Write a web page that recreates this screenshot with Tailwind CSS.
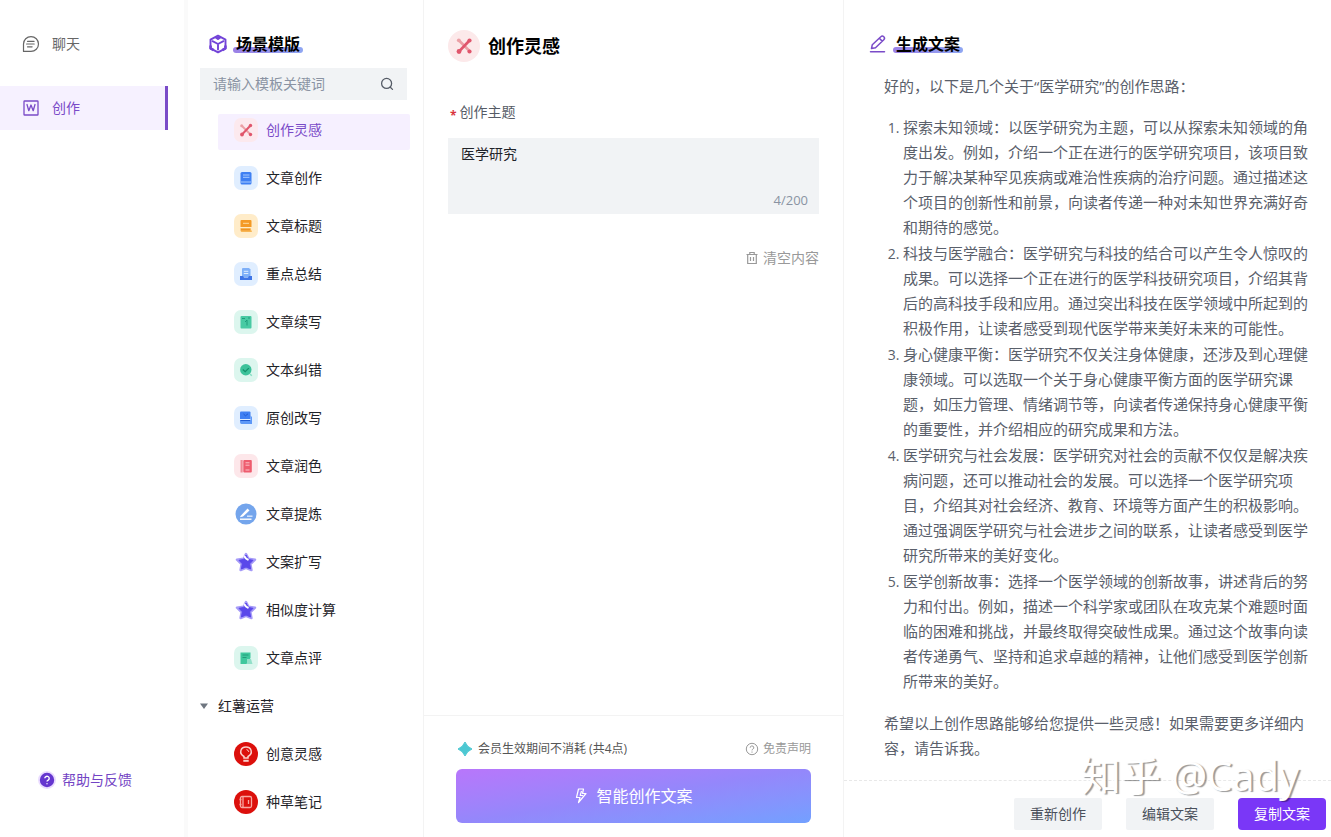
<!DOCTYPE html>
<html lang="zh-CN">
<head>
<meta charset="utf-8">
<meta name="viewport" content="width=device-width, initial-scale=1">
<title>创作</title>
<script src="https://cdn.jsdelivr.net/npm/@tailwindcss/browser@4"></script>
</head>
<body class="bg-white font-['Open_Sans','Noto_Sans_CJK_SC',sans-serif] text-sm text-[#1f2329]">
<div class="flex h-screen overflow-hidden">

  <!-- Main navigation -->
  <nav class="flex w-46 shrink-0 flex-col justify-between pt-[22px] pb-[35px]">
    <div class="flex flex-col gap-5 pr-4">
      <a href="#" class="flex h-11 items-center gap-3 pl-[22px] text-[#666]">
        <svg class="size-[18px]" viewBox="0 0 18 18" fill="none" stroke="currentColor" stroke-width="1.200" stroke-linecap="round" stroke-linejoin="round"><path d="M1.500 16.400V9a7.500 7.400 0 1 1 7.500 7.400Z"/><path d="M5.500 6.300h6.600M4.600 9h7.600M5.500 11.800h4.600"/></svg>
        聊天
      </a>
      <a href="#" aria-current="page" class="flex h-11 items-center gap-3 border-r-3 border-[#7a4bc8] bg-[#f6f1ff] pl-[22px] text-[#7a4bc8]">
        <svg class="size-[18px]" viewBox="0 0 18 18" fill="none" stroke="currentColor" stroke-width="1.300" stroke-linejoin="round"><rect x="2" y="2" width="14" height="14" rx=".6"/><path d="M5 5.500l1.800 6.200L9 6l2.200 5.700L13 5.500" stroke-linecap="round"/></svg>
        创作
      </a>
    </div>
    <a href="#" class="flex items-center gap-[6px] pl-[38px] leading-11 text-[#7344c4]">
      <svg class="size-[18px]" viewBox="0 0 18 18"><circle cx="9" cy="9" r="9" fill="#eadcff"/><circle cx="9" cy="9" r="7.200" fill="#6536cf"/><path d="M6.800 7.300a2.200 2.100 0 1 1 3.400 1.800c-.8.5-1.200.8-1.200 1.500M9 12.200v1" fill="none" stroke="#fff" stroke-width="1.400"/></svg>
      帮助与反馈
    </a>
  </nav>

  <!-- Template list -->
  <aside class="flex w-60 shrink-0 flex-col border-r border-l-4 border-r-[#f3f3f3] border-l-[#fafafa] pt-8">
    <h2 class="flex h-6 items-center gap-[5px] pl-5 text-base font-bold text-black">
      <svg class="size-5" viewBox="0 0 20 20" fill="none" stroke="#7344d8" stroke-width="1.900" stroke-linejoin="round"><path d="M10 1.600l7.500 4.100v8.600L10 18.400l-7.500-4.100V5.700Z"/><path d="M4.500 7.200L10 10l5.500-2.800M10 10v5.500" stroke-linecap="round"/><path d="M7.500 3l2.500 1.600L12.500 3M2.600 11.500v2.800l3 1.800M17.400 11.500v2.800l-3 1.800" stroke-width="2.600"/></svg>
      <span class="relative isolate px-[3px] leading-6 after:absolute after:inset-x-0 after:bottom-[3px] after:-z-10 after:h-[6px] after:rounded-full after:bg-linear-to-r after:from-[#9b80e6] after:to-[#8fa6f2]">场景模版</span>
    </h2>
    <label class="mt-3 mr-4 ml-3 flex h-8 shrink-0 items-center bg-[#f1f3f5] pr-3 pl-[13px]">
      <input type="search" aria-label="搜索模板" placeholder="请输入模板关键词" class="min-w-0 flex-1 bg-transparent outline-none placeholder:text-[#8a93a3]">
      <svg class="size-4" viewBox="0 0 16 16" fill="none" stroke="#555b66" stroke-width="1.300" stroke-linecap="round"><circle cx="7.600" cy="7.400" r="5"/><path d="M11.300 11.200l2.200 2.200"/></svg>
    </label>
    <ul class="mt-[14px] mr-[13px] ml-[30px] flex flex-col gap-3">
      <li><a href="#" aria-current="true" class="flex h-9 items-center gap-2 rounded-xs bg-[#f6f0ff] pb-1 pl-4 text-[#7a4bc8]">
        <svg class="size-6" viewBox="0 0 24 24"><rect width="24" height="24" rx="7" fill="#fce9ee"/><path d="M8 8l8.500 8.500" stroke="#eba0a6" stroke-width="2"/><path d="M16.500 7.500L8 16.500" stroke="#e0566c" stroke-width="2"/><g fill="#e0566c"><circle cx="16.500" cy="7.500" r="1.700"/><circle cx="8" cy="16.500" r="1.900"/><circle cx="16.500" cy="16.500" r="1.700"/></g><circle cx="7.700" cy="7.700" r="1.500" fill="#eba0a6"/></svg>
        创作灵感</a></li>
      <li><a href="#" class="flex h-9 items-center gap-2 pb-1 pl-4">
        <svg class="size-6" viewBox="0 0 24 24"><rect width="24" height="24" rx="7" fill="#e0eeff"/><rect x="6.500" y="6" width="11" height="12.500" rx="1.500" fill="#3f80f3"/><path d="M9 9h6.500M9 11.300h6.500M7 16h10" stroke="#a9cbff" stroke-width="1"/></svg>
        文章创作</a></li>
      <li><a href="#" class="flex h-9 items-center gap-2 pb-1 pl-4">
        <svg class="size-6" viewBox="0 0 24 24"><rect width="24" height="24" rx="7" fill="#ffecc9"/><path d="M7.500 6h9q1 0 1 1v6h-11V7q0-1 1-1Z" fill="#f49a25"/><path d="M9 9.300h6" stroke="#ffdca0"/><path d="M6.500 14h10l1.500 4H7.500q-1.500-.5-1-4Z" fill="#f8b654"/><path d="M7 15.800h9" stroke="#e98713"/></svg>
        文章标题</a></li>
      <li><a href="#" class="flex h-9 items-center gap-2 pb-1 pl-4">
        <svg class="size-6" viewBox="0 0 24 24"><rect width="24" height="24" rx="7" fill="#e0eeff"/><path d="M8 7q0-1 1-1h6l1.500 1.500V15H8Z" fill="#7fb0f8"/><path d="M9.800 9.300h4.500M9.800 11.500h4.500" stroke="#e0eeff"/><path d="M6 14h3l1 1.500h4l1-1.500h3v4H6Z" fill="#3f75e6"/></svg>
        重点总结</a></li>
      <li><a href="#" class="flex h-9 items-center gap-2 pb-1 pl-4">
        <svg class="size-6" viewBox="0 0 24 24"><rect width="24" height="24" rx="7" fill="#dcf6ee"/><rect x="6.500" y="6" width="11" height="12.500" rx="1" fill="#48caa3"/><path d="M8 8.500h3M11 12l2-2v5.500M14 8h2" stroke="#1e9c7a" fill="none"/></svg>
        文章续写</a></li>
      <li><a href="#" class="flex h-9 items-center gap-2 pb-1 pl-4">
        <svg class="size-6" viewBox="0 0 24 24"><rect width="24" height="24" rx="7" fill="#dcf6ee"/><circle cx="11.800" cy="11.700" r="5.700" fill="#3cc29a"/><path d="M8.800 11.500l2.400 2.200 3.600-3.600" fill="none" stroke="#148f6b" stroke-width="1.300"/><path d="M16 16l1.800 1.800" stroke="#8adfc5" stroke-width="1.500"/></svg>
        文本纠错</a></li>
      <li><a href="#" class="flex h-9 items-center gap-2 pb-1 pl-4">
        <svg class="size-6" viewBox="0 0 24 24"><rect width="24" height="24" rx="7" fill="#e0eeff"/><path d="M6 6.500q0-1 1-1h8.500q1 0 1 1V13H6Z" fill="#3f80f3"/><path d="M6 14h10.500V9.500L18 11v7H7.500Q6 18 6 16Z" fill="#5e98f7"/><path d="M9.500 8l2 1.800 2.500-2M6.500 14.500h9.500" stroke="#1f5ad2" fill="none"/></svg>
        原创改写</a></li>
      <li><a href="#" class="flex h-9 items-center gap-2 pb-1 pl-4">
        <svg class="size-6" viewBox="0 0 24 24"><rect width="24" height="24" rx="7" fill="#fde7ea"/><rect x="6.500" y="6" width="2.200" height="12.500" fill="#f08c98"/><rect x="9.300" y="6" width="8.500" height="12.500" rx="1" fill="#ee5c6e"/><path d="M11.500 8.800h4M11.500 11.200h4M11.500 16h4" stroke="#fbc0c7"/></svg>
        文章润色</a></li>
      <li><a href="#" class="flex h-9 items-center gap-2 pb-1 pl-4">
        <svg class="size-6" viewBox="0 0 24 24"><circle cx="12" cy="12" r="10.500" fill="#74a5ec"/><path d="M6.500 14l7-7.500 2 2-6.500 6-3 .8Z" fill="#fff"/><path d="M6 17.200h11.500" stroke="#fff" stroke-width="1.400"/><path d="M13 14.200h5.500" stroke="#dbe9ff" stroke-width="1.400"/></svg>
        文章提炼</a></li>
      <li><a href="#" class="flex h-9 items-center gap-2 pb-1 pl-4">
        <svg class="size-6" viewBox="0 0 24 24" stroke-linejoin="round"><path d="M12 4l2.400 4.800 6.600.9-4.600 4.500 1 5.800-5.400-2.200-5.400 2.200 1-5.800L3 9.700l6.600-.9Z" fill="#a69bf8" stroke="#a69bf8" stroke-width="2.500"/><path d="M12 5l2.400 4.500 4.600.8-3.300 3.500.9 5.200-4.600-2-4.600 2 .9-5.200L5 10.300l4.600-.8Z" fill="#5a48ea" stroke="#5a48ea"/><path d="M10.500 6.500q1.200 2.300 3.300 3.200" stroke="#fff" stroke-width="2" fill="none" stroke-linecap="round"/></svg>
        文案扩写</a></li>
      <li><a href="#" class="flex h-9 items-center gap-2 pb-1 pl-4">
        <svg class="size-6" viewBox="0 0 24 24" stroke-linejoin="round"><path d="M12 4l2.400 4.800 6.600.9-4.600 4.500 1 5.800-5.400-2.200-5.400 2.200 1-5.800L3 9.700l6.600-.9Z" fill="#a69bf8" stroke="#a69bf8" stroke-width="2.500"/><path d="M12 5l2.400 4.500 4.600.8-3.300 3.500.9 5.200-4.600-2-4.600 2 .9-5.200L5 10.300l4.600-.8Z" fill="#5a48ea" stroke="#5a48ea"/><path d="M10.500 6.500q1.200 2.300 3.300 3.200" stroke="#fff" stroke-width="2" fill="none" stroke-linecap="round"/></svg>
        相似度计算</a></li>
      <li><a href="#" class="flex h-9 items-center gap-2 pb-1 pl-4">
        <svg class="size-6" viewBox="0 0 24 24"><rect width="24" height="24" rx="7" fill="#dcf6ee"/><path d="M6.500 6.500h10V12l-4 6h-6Z" fill="#3fc79d"/><path d="M8.500 9h6M8.500 11.500h4" stroke="#229c7a"/><path d="M13 13h4l1.500 5H13Z" fill="#92e0c9"/></svg>
        文章点评</a></li>
      <li><button type="button" class="-ml-[18px] flex h-9 items-center gap-[10px] pb-1">
        <svg class="size-2" viewBox="0 0 8 8"><path d="M0 1.500h8L4 7Z" fill="#6f7680"/></svg>
        红薯运营</button></li>
      <li><a href="#" class="flex h-9 items-center gap-2 pb-1 pl-4">
        <svg class="size-6" viewBox="0 0 24 24" fill="none" stroke="#fbd0cc" stroke-width="1.500"><circle cx="12" cy="12" r="12" fill="#dc100c" stroke="none"/><path d="M10 16v-1.500C4.500 11.500 6.500 5 12 5s7.500 6.500 2 9.500V16Z"/><path d="M9.300 18.800h5.400" stroke-width="2"/><path d="M12.500 7.600q2 .4 2.300 2.300" stroke-width="1"/></svg>
        创意灵感</a></li>
      <li><a href="#" class="flex h-9 items-center gap-2 pb-1 pl-4">
        <svg class="size-6" viewBox="0 0 24 24" fill="none" stroke="#f7a8a2" stroke-width="1.300"><circle cx="12" cy="12" r="12" fill="#dc100c" stroke="none"/><rect x="6.500" y="6.500" width="11" height="11" rx="1.500"/><path d="M9 7v10M14.500 10v4M5.500 9.500h2M5.500 14.500h2"/></svg>
        种草笔记</a></li>
    </ul>
  </aside>

  <!-- Prompt form -->
  <main class="flex w-[420px] shrink-0 flex-col border-r border-[#f3f3f3]">
    <form class="flex flex-1 flex-col px-6 pt-[30px]">
      <h1 class="flex h-8 items-center gap-2 text-lg font-bold text-black">
        <svg class="size-8" viewBox="0 0 32 32"><circle cx="16" cy="16" r="16" fill="#fce9ea"/><path d="M11 10.500L21.500 21" stroke="#eba0a6" stroke-width="2.600"/><path d="M21.500 10.500L11 21.500" stroke="#e0566c" stroke-width="2.600"/><g fill="#e0566c"><circle cx="21.500" cy="10.500" r="2.100"/><circle cx="11" cy="21.500" r="2.400"/><circle cx="21.500" cy="21.500" r="2.100"/></g><circle cx="10.800" cy="10.300" r="1.900" fill="#eba0a6"/></svg>
        创作灵感
      </h1>
      <label for="topic" class="mt-10 flex h-5 items-center gap-[3px] pl-[2px] leading-5 text-[#555b66]"><span class="pt-2 text-xs font-bold text-[#d9363e]">*</span>创作主题</label>
      <div class="mt-4 flex h-19 flex-col bg-[#f1f3f5] px-[11px]">
        <textarea id="topic" maxlength="200" class="min-h-0 flex-1 resize-none bg-transparent px-[2px] pt-[5px] leading-[22px] outline-none">医学研究</textarea>
        <output for="topic" class="pb-1 text-right text-[13px] leading-5 text-[#8a93a3]">4/200</output>
      </div>
      <button type="reset" class="mt-[34px] flex items-center gap-1 self-end leading-5 text-[#999]">
        <svg class="size-[14px]" viewBox="0 0 14 14" fill="none" stroke="currentColor" stroke-width="1.200"><path d="M1.500 3.500h11M4.800 3.300V1.500h4.400v1.800M2.700 3.500v9h8.600v-9M5.500 6v4M8.500 6v4"/></svg>
        清空内容
      </button>
    </form>
    <footer class="border-t border-[#f3f3f3] px-8 pt-[23px] pb-[14px]">
      <div class="flex items-center justify-between text-xs leading-5">
        <p class="flex items-center gap-[5px] pl-[1px] text-[#555]">
          <svg class="size-4" viewBox="0 0 16 16"><path d="M8 1Q10 6 15 8 10 10 8 15 6 10 1 8 6 6 8 1Z" fill="#4cc8d2" stroke="#4cc8d2" stroke-linejoin="round"/></svg>
          会员生效期间不消耗 (共4点)
        </p>
        <a href="#" class="flex items-center gap-1 text-[#999]">
          <svg class="size-[14px]" viewBox="0 0 14 14" fill="none" stroke="currentColor"><circle cx="7" cy="7" r="5.700"/><path d="M5.200 5.700a1.800 1.700 0 1 1 2.700 1.400c-.6.400-.9.600-.9 1.300M7 9.500v1.200"/></svg>
          免责声明
        </a>
      </div>
      <button type="button" class="mt-[10px] flex h-[54px] w-full items-center justify-center gap-2 rounded-md bg-linear-to-br from-[#b876fb] via-[#9487fb] to-[#72a0ff] text-base text-white">
        <svg class="h-[18px] w-[14px]" viewBox="0 0 14 18" fill="none" stroke="currentColor" stroke-width="1.200" stroke-linejoin="round"><path d="M4.500 2h5L8.500 6.500H12L4.500 15.500 6 10.500H2.500Z"/><path d="M7.500 4L6.200 8.500H9"/></svg>
        智能创作文案
      </button>
    </footer>
  </main>

  <!-- Generated copy -->
  <section class="relative flex min-w-0 flex-1 flex-col pt-8">
    <h2 class="flex h-6 items-center gap-[6px] pl-[25px] text-base font-bold text-black">
      <svg class="size-[18px]" viewBox="0 0 18 18" fill="none" stroke="#7a4bc8" stroke-width="1.500" stroke-linejoin="round" stroke-linecap="round"><path d="M2.500 13.500l.8-3.800 8.500-8a2 2 0 0 1 3 3L6.500 12.700ZM10.300 3.200l2.900 2.900M1.500 16.700h14"/></svg>
      <span class="relative isolate px-[3px] leading-6 after:absolute after:inset-x-0 after:bottom-[3px] after:-z-10 after:h-[6px] after:rounded-full after:bg-linear-to-r after:from-[#9b80e6] after:to-[#8fa6f2]">生成文案</span>
    </h2>
    <article class="mt-[18px] min-h-0 flex-1 overflow-hidden pr-[21px] pl-10 text-[15px] leading-[25px] text-[#5a606b]">
      <p>好的，以下是几个关于“医学研究”的创作思路：</p>
      <ol class="mt-4 mb-[17px] flex list-decimal flex-col gap-[1px] pl-[19px] marker:text-sm">
        <li>探索未知领域：以医学研究为主题，可以从探索未知领域的角度出发。例如，介绍一个正在进行的医学研究项目，该项目致力于解决某种罕见疾病或难治性疾病的治疗问题。通过描述这个项目的创新性和前景，向读者传递一种对未知世界充满好奇和期待的感觉。</li>
        <li>科技与医学融合：医学研究与科技的结合可以产生令人惊叹的成果。可以选择一个正在进行的医学科技研究项目，介绍其背后的高科技手段和应用。通过突出科技在医学领域中所起到的积极作用，让读者感受到现代医学带来美好未来的可能性。</li>
        <li>身心健康平衡：医学研究不仅关注身体健康，还涉及到心理健康领域。可以选取一个关于身心健康平衡方面的医学研究课题，如压力管理、情绪调节等，向读者传递保持身心健康平衡的重要性，并介绍相应的研究成果和方法。</li>
        <li>医学研究与社会发展：医学研究对社会的贡献不仅仅是解决疾病问题，还可以推动社会的发展。可以选择一个医学研究项目，介绍其对社会经济、教育、环境等方面产生的积极影响。通过强调医学研究与社会进步之间的联系，让读者感受到医学研究所带来的美好变化。</li>
        <li>医学创新故事：选择一个医学领域的创新故事，讲述背后的努力和付出。例如，描述一个科学家或团队在攻克某个难题时面临的困难和挑战，并最终取得突破性成果。通过这个故事向读者传递勇气、坚持和追求卓越的精神，让他们感受到医学创新所带来的美好。</li>
      </ol>
      <p>希望以上创作思路能够给您提供一些灵感！如果需要更多详细内容，请告诉我。</p>
    </article>
    <footer class="flex justify-end gap-6 border-t border-dashed border-[#e8e8e8] pt-[17px] pr-[5px] pb-[7px]">
      <button type="button" class="h-8 rounded-xs bg-[#f1f3f5] px-4 text-[#4a505b]">重新创作</button>
      <button type="button" class="h-8 rounded-xs bg-[#f1f3f5] px-4 text-[#4a505b]">编辑文案</button>
      <button type="button" class="h-8 rounded-sm bg-[#7a37f7] px-4 text-white">复制文案</button>
    </footer>
    <p class="pointer-events-none absolute right-8 bottom-[46px] text-[40px] leading-[30px] text-white [text-shadow:2px_1px_1px_rgba(0,0,0,0.4)]">知乎 @Cady</p>
  </section>
</div>
</body>
</html>
